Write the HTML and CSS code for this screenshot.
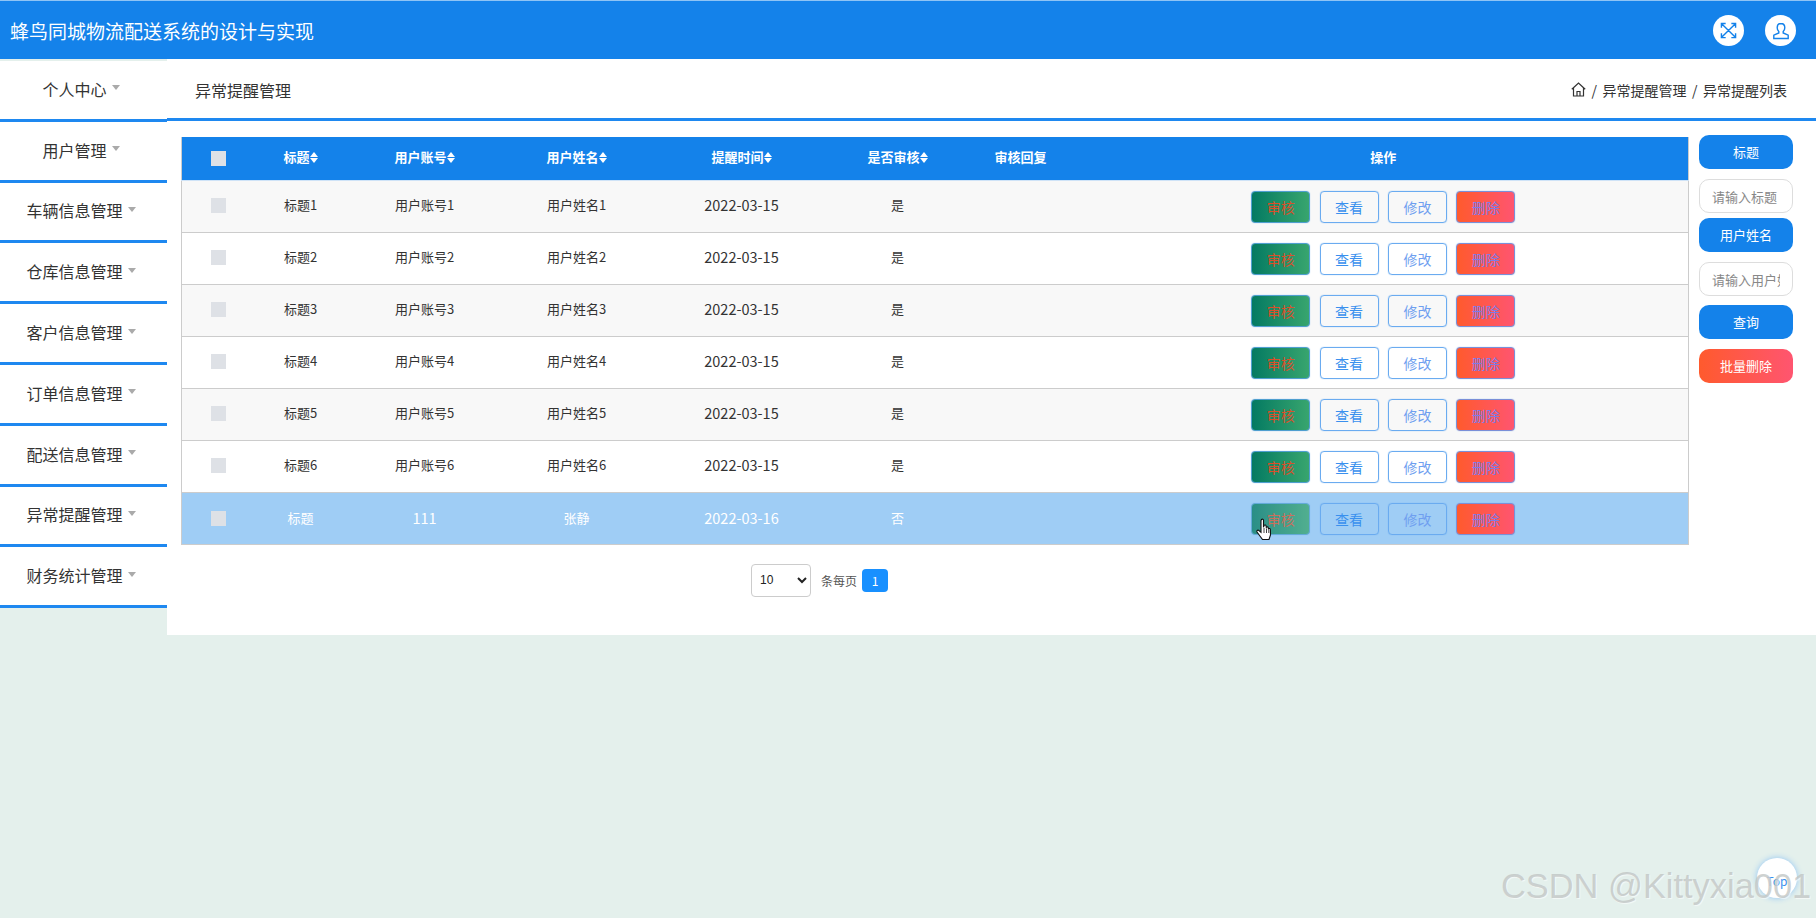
FILE: index.html
```html
<!DOCTYPE html>
<html>
  <head>
    <title>蜂鸟同城物流配送系统的设计与实现</title>
    <link rel="stylesheet" href="styles.css">
  </head>
  <body>
    <header class="top-bar">
      <div class="site-title">蜂鸟同城物流配送系统的设计与实现</div>
      <div class="top-icons">
        <span class="round-icon">
          <svg width="17" height="17" viewBox="0 0 18 18" fill="none" stroke="#1482ea" stroke-width="1.5">
            <path d="M1.500 6V1.500H6M12 1.500h4.500V6M16.500 12v4.500H12M6 16.500H1.500V12M2 2l14 14M16 2L2 16"/>
          </svg>
        </span>
        <span class="round-icon">
          <svg width="18" height="18" viewBox="0 0 18 18" fill="none" stroke="#1482ea" stroke-width="1.4">
            <path d="M9 1.500c-2.300 0-3.800 1.800-3.800 4.200 0 1.700.7 3 1.600 3.900v1.400L1.800 13.200v3.300h14.400v-3.300l-5-2.200V9.600c.9-.9 1.600-2.200 1.600-3.900 0-2.400-1.500-4.200-3.800-4.200z"/>
          </svg>
        </span>
      </div>
    </header>

    <div class="layout">
      <nav class="side-menu">
        <div class="menu-item"><span>个人中心</span><i class="caret"></i></div>
        <div class="menu-item"><span>用户管理</span><i class="caret"></i></div>
        <div class="menu-item"><span>车辆信息管理</span><i class="caret"></i></div>
        <div class="menu-item"><span>仓库信息管理</span><i class="caret"></i></div>
        <div class="menu-item"><span>客户信息管理</span><i class="caret"></i></div>
        <div class="menu-item"><span>订单信息管理</span><i class="caret"></i></div>
        <div class="menu-item"><span>配送信息管理</span><i class="caret"></i></div>
        <div class="menu-item"><span>异常提醒管理</span><i class="caret"></i></div>
        <div class="menu-item"><span>财务统计管理</span><i class="caret"></i></div>
      </nav>

      <main class="main-panel">
        <div class="crumb-bar">
          <div class="crumb-title">异常提醒管理</div>
          <div class="crumbs">
            <svg width="15" height="15" viewBox="0 0 15 15" fill="none" stroke="#333" stroke-width="1.2">
              <path d="M.8 7.300L7.500 1l6.700 6.300M2.500 6v8h10V6M6 14V9.500h3V14"/>
            </svg>
            <span>/</span><span>异常提醒管理</span><span>/</span><span>异常提醒列表</span>
          </div>
        </div>

        <div class="content">
          <div class="table-area">
            <table class="data-table">
              <thead>
                <tr>
                  <th><i class="check"></i></th>
                  <th>标题<i class="sort"></i></th>
                  <th>用户账号<i class="sort"></i></th>
                  <th>用户姓名<i class="sort"></i></th>
                  <th>提醒时间<i class="sort"></i></th>
                  <th>是否审核<i class="sort"></i></th>
                  <th>审核回复</th>
                  <th>操作</th>
                </tr>
              </thead>
              <tbody>
                <tr>
                  <td><i class="check"></i></td><td>标题1</td><td>用户账号1</td><td>用户姓名1</td><td class="num-cell">2022-03-15</td><td>是</td><td></td>
                  <td class="action-cell"><div class="actions"><button class="btn-audit">审核</button><button class="btn-view">查看</button><button class="btn-edit">修改</button><button class="btn-del">删除</button></div></td>
                </tr>
                <tr>
                  <td><i class="check"></i></td><td>标题2</td><td>用户账号2</td><td>用户姓名2</td><td class="num-cell">2022-03-15</td><td>是</td><td></td>
                  <td class="action-cell"><div class="actions"><button class="btn-audit">审核</button><button class="btn-view">查看</button><button class="btn-edit">修改</button><button class="btn-del">删除</button></div></td>
                </tr>
                <tr>
                  <td><i class="check"></i></td><td>标题3</td><td>用户账号3</td><td>用户姓名3</td><td class="num-cell">2022-03-15</td><td>是</td><td></td>
                  <td class="action-cell"><div class="actions"><button class="btn-audit">审核</button><button class="btn-view">查看</button><button class="btn-edit">修改</button><button class="btn-del">删除</button></div></td>
                </tr>
                <tr>
                  <td><i class="check"></i></td><td>标题4</td><td>用户账号4</td><td>用户姓名4</td><td class="num-cell">2022-03-15</td><td>是</td><td></td>
                  <td class="action-cell"><div class="actions"><button class="btn-audit">审核</button><button class="btn-view">查看</button><button class="btn-edit">修改</button><button class="btn-del">删除</button></div></td>
                </tr>
                <tr>
                  <td><i class="check"></i></td><td>标题5</td><td>用户账号5</td><td>用户姓名5</td><td class="num-cell">2022-03-15</td><td>是</td><td></td>
                  <td class="action-cell"><div class="actions"><button class="btn-audit">审核</button><button class="btn-view">查看</button><button class="btn-edit">修改</button><button class="btn-del">删除</button></div></td>
                </tr>
                <tr>
                  <td><i class="check"></i></td><td>标题6</td><td>用户账号6</td><td>用户姓名6</td><td class="num-cell">2022-03-15</td><td>是</td><td></td>
                  <td class="action-cell"><div class="actions"><button class="btn-audit">审核</button><button class="btn-view">查看</button><button class="btn-edit">修改</button><button class="btn-del">删除</button></div></td>
                </tr>
                <tr class="row-active">
                  <td><i class="check"></i></td><td>标题</td><td class="num-cell">111</td><td>张静</td><td class="num-cell">2022-03-16</td><td>否</td><td></td>
                  <td class="action-cell"><div class="actions"><button class="btn-audit">审核</button><button class="btn-view">查看</button><button class="btn-edit">修改</button><button class="btn-del">删除</button></div></td>
                </tr>
              </tbody>
            </table>

            <div class="pagination">
              <select class="page-size">
                <option>10</option>
              </select>
              <span class="page-label">条每页</span>
              <span class="page-num">1</span>
            </div>
          </div>

          <aside class="search-panel">
            <div class="pill-label">标题</div>
            <input class="pill-input" type="text" placeholder="请输入标题">
            <div class="pill-label">用户姓名</div>
            <input class="pill-input" type="text" placeholder="请输入用户姓名">
            <button class="pill-btn">查询</button>
            <button class="pill-btn pill-danger">批量删除</button>
          </aside>
        </div>
      </main>
    </div>

    <svg class="hand-cursor" width="18" height="23" viewBox="0 0 18 23">
      <path d="M5.500 1.500c.8-.8 2-.4 2 .8v7l.6-2c1-.6 1.900-.3 2 .6l.2 1.400c.8-.8 1.900-.5 2 .5l.1 1c.8-.6 1.900-.3 2 .7l.1 5.500-1.500 4.500H6.500L1 14c-.5-1 .4-2.300 1.600-1.700l2.400 2V2.500z" fill="#fff" stroke="#111" stroke-width="1.100"/>
      <path d="M8 10v5M10.500 10.500V15M12.800 11.500V15" stroke="#111" stroke-width=".8"/>
    </svg>
    <div class="top-link">Top</div>
    <div class="watermark">CSDN @Kittyxia001</div>
  </body>
</html>
```

FILE: styles.css
```css
* {
  box-sizing: border-box;
}

html,
body {
  height: 100%;
}

body {
  margin: 0;
  background-color: #e4f0ec;
  font-family: "Noto Sans CJK SC", "Liberation Sans", sans-serif;
  color: #333;
  overflow: hidden;
}

.top-bar {
  display: flex;
  justify-content: space-between;
  align-items: center;
  height: 59px;
  padding: 1px 20px 0 10px;
  background-color: #1482ea;
  border-top: 1px solid #8fc4f5;
}

.site-title {
  font-size: 19px;
  color: #fff;
}

.top-icons {
  display: flex;
  gap: 21px;
}

.round-icon {
  display: flex;
  justify-content: center;
  align-items: center;
  width: 31px;
  height: 31px;
  border-radius: 50%;
  background-color: #fff;
}

.layout {
  display: flex;
  align-items: flex-start;
}

.side-menu {
  width: 167px;
  padding-top: 2px;
}

.menu-item {
  display: flex;
  justify-content: center;
  align-items: center;
  gap: 5px;
  height: 60.8px;
  padding: 0 5px 2px 0;
  background-color: #fff;
  border-bottom: 3px solid #1e88f0;
  font-size: 16px;
  color: #333;
}

.caret {
  width: 0;
  height: 0;
  margin-top: -2px;
  border-left: 4px solid transparent;
  border-right: 4px solid transparent;
  border-top: 5px solid #aaa;
}

.main-panel {
  flex: 1;
  height: 576px;
  background-color: #fff;
}

.crumb-bar {
  display: flex;
  justify-content: space-between;
  align-items: center;
  height: 62px;
  padding: 2px 29px 0 28px;
  border-bottom: 3px solid #1e88f0;
}

.crumb-title {
  font-size: 16px;
}

.crumbs {
  display: flex;
  align-items: center;
  gap: 5.5px;
  font-size: 14px;
}

.content {
  display: flex;
  padding: 14px 0 0 14px;
}

.table-area {
  width: 1508px;
  padding-top: 2px;
}

.data-table {
  width: 100%;
  table-layout: fixed;
  border-collapse: collapse;
  border-left: 1px solid #ccc;
  border-right: 1px solid #ccc;
  font-size: 13px;
}

.data-table th {
  height: 43px;
  padding: 0 0 3px;
  background-color: #1482ea;
  color: #fff;
  font-weight: bold;
  border-bottom: 1px solid #cfe3f7;
}

.data-table td {
  height: 52px;
  padding: 0 0 4px;
  text-align: center;
  border-bottom: 1px solid #ccc;
}

.data-table .num-cell {
  font-size: 14.5px;
}

.data-table .action-cell {
  padding: 0;
}

.data-table th:nth-child(1) {
  width: 73px;
}

.data-table th:nth-child(2) {
  width: 92px;
}

.data-table th:nth-child(3) {
  width: 156px;
}

.data-table th:nth-child(4) {
  width: 148px;
}

.data-table th:nth-child(5) {
  width: 182px;
}

.data-table th:nth-child(6) {
  width: 130px;
}

.data-table th:nth-child(7) {
  width: 116px;
}

.data-table tbody tr:nth-child(odd) {
  background-color: #f8f8f8;
}

.data-table tbody tr:nth-child(even) {
  background-color: #fff;
}

.data-table tbody tr.row-active {
  background-color: #9fcdf5;
  color: #fff;
}

.data-table .row-active td {
  padding-bottom: 2px;
}

.data-table .row-active .action-cell {
  padding: 0;
}

.check {
  display: inline-block;
  width: 15px;
  height: 15px;
  vertical-align: middle;
  background-color: #dee1e6;
}

.sort {
  position: relative;
  display: inline-block;
  width: 8px;
  height: 11px;
  vertical-align: -1px;
}

.sort::before,
.sort::after {
  content: "";
  position: absolute;
  left: 0;
  border-left: 4px solid transparent;
  border-right: 4px solid transparent;
}

.sort::before {
  top: 0;
  border-bottom: 5px solid #fff;
}

.sort::after {
  bottom: 0;
  border-top: 5px solid #fff;
}

.actions {
  display: flex;
  justify-content: center;
  gap: 9.4px;
  margin-top: 2px;
}

.actions button {
  width: 59px;
  height: 32px;
  padding: 0;
  border: 1px solid #6aabf0;
  border-radius: 4px;
  background: transparent;
  box-shadow: 0 0 1px #6aabf0;
  font-family: inherit;
  font-size: 14px;
}

.actions .btn-audit {
  color: #d9502a;
  background: linear-gradient(to right, #047a62, #38a56e);
  border-color: #4f9fd0;
}

.btn-view {
  color: #3a90ee;
}

.btn-edit {
  color: #6f9ff0;
}

.actions .btn-del {
  color: #7b7ce8;
  background: linear-gradient(to right, #ff5a2d, #ff5570);
  border-color: #7a8fd8;
}

.row-active .btn-audit {
  opacity: 0.75;
}

.pagination {
  display: flex;
  justify-content: center;
  align-items: center;
  margin-top: 19px;
  padding-right: 231px;
}

.page-size {
  width: 60px;
  height: 33px;
  padding-left: 4px;
  background-color: #fff;
  border: 1px solid #ccc;
  border-radius: 4px;
  font-family: "Liberation Sans", sans-serif;
  font-size: 12px;
  color: #222;
}

.page-label {
  margin: 0 5px 0 10px;
  font-size: 12px;
  color: #555;
}

.page-num {
  width: 26px;
  height: 23px;
  border-radius: 4px;
  background-color: #1890ff;
  color: #fff;
  font-size: 12px;
  line-height: 23px;
  text-align: center;
}

.search-panel {
  display: flex;
  flex-direction: column;
  width: 94px;
  margin-left: 10px;
}

.pill-label,
.pill-btn {
  width: 94px;
  height: 34px;
  border: none;
  border-radius: 10px;
  background-color: #1482ea;
  color: #fff;
  font-family: inherit;
  font-size: 13px;
  line-height: 34px;
  text-align: center;
  padding: 0;
}

.pill-input {
  width: 94px;
  height: 34px;
  margin: 10px 0 5px;
  padding: 0 12px;
  border: 1px solid #ddd;
  border-radius: 10px;
  font-family: inherit;
  font-size: 13px;
}

.pill-input::placeholder {
  color: #888;
}

.pill-input:last-of-type {
  margin-bottom: 9px;
}

.pill-btn {
  margin-bottom: 10px;
}

.pill-danger {
  background: linear-gradient(to right, #ff5a2d, #ff5570);
}

.hand-cursor {
  position: absolute;
  left: 1256px;
  top: 518px;
}

.top-link {
  position: absolute;
  left: 1757px;
  top: 858px;
  width: 40px;
  height: 40px;
  border-radius: 50%;
  background-color: #fff;
  box-shadow: 0 0 6px #8fc4f5;
  color: #3a90ee;
  font-size: 12px;
  line-height: 46px;
  text-align: center;
}

.watermark {
  position: absolute;
  left: 1501px;
  top: 866px;
  font-family: "Liberation Sans", sans-serif;
  font-size: 34.4px;
  line-height: 40px;
  color: rgba(190, 195, 194, 0.75);
  text-shadow: 1px 1px 1px rgba(255, 255, 255, 0.6);
  white-space: nowrap;
}
```
